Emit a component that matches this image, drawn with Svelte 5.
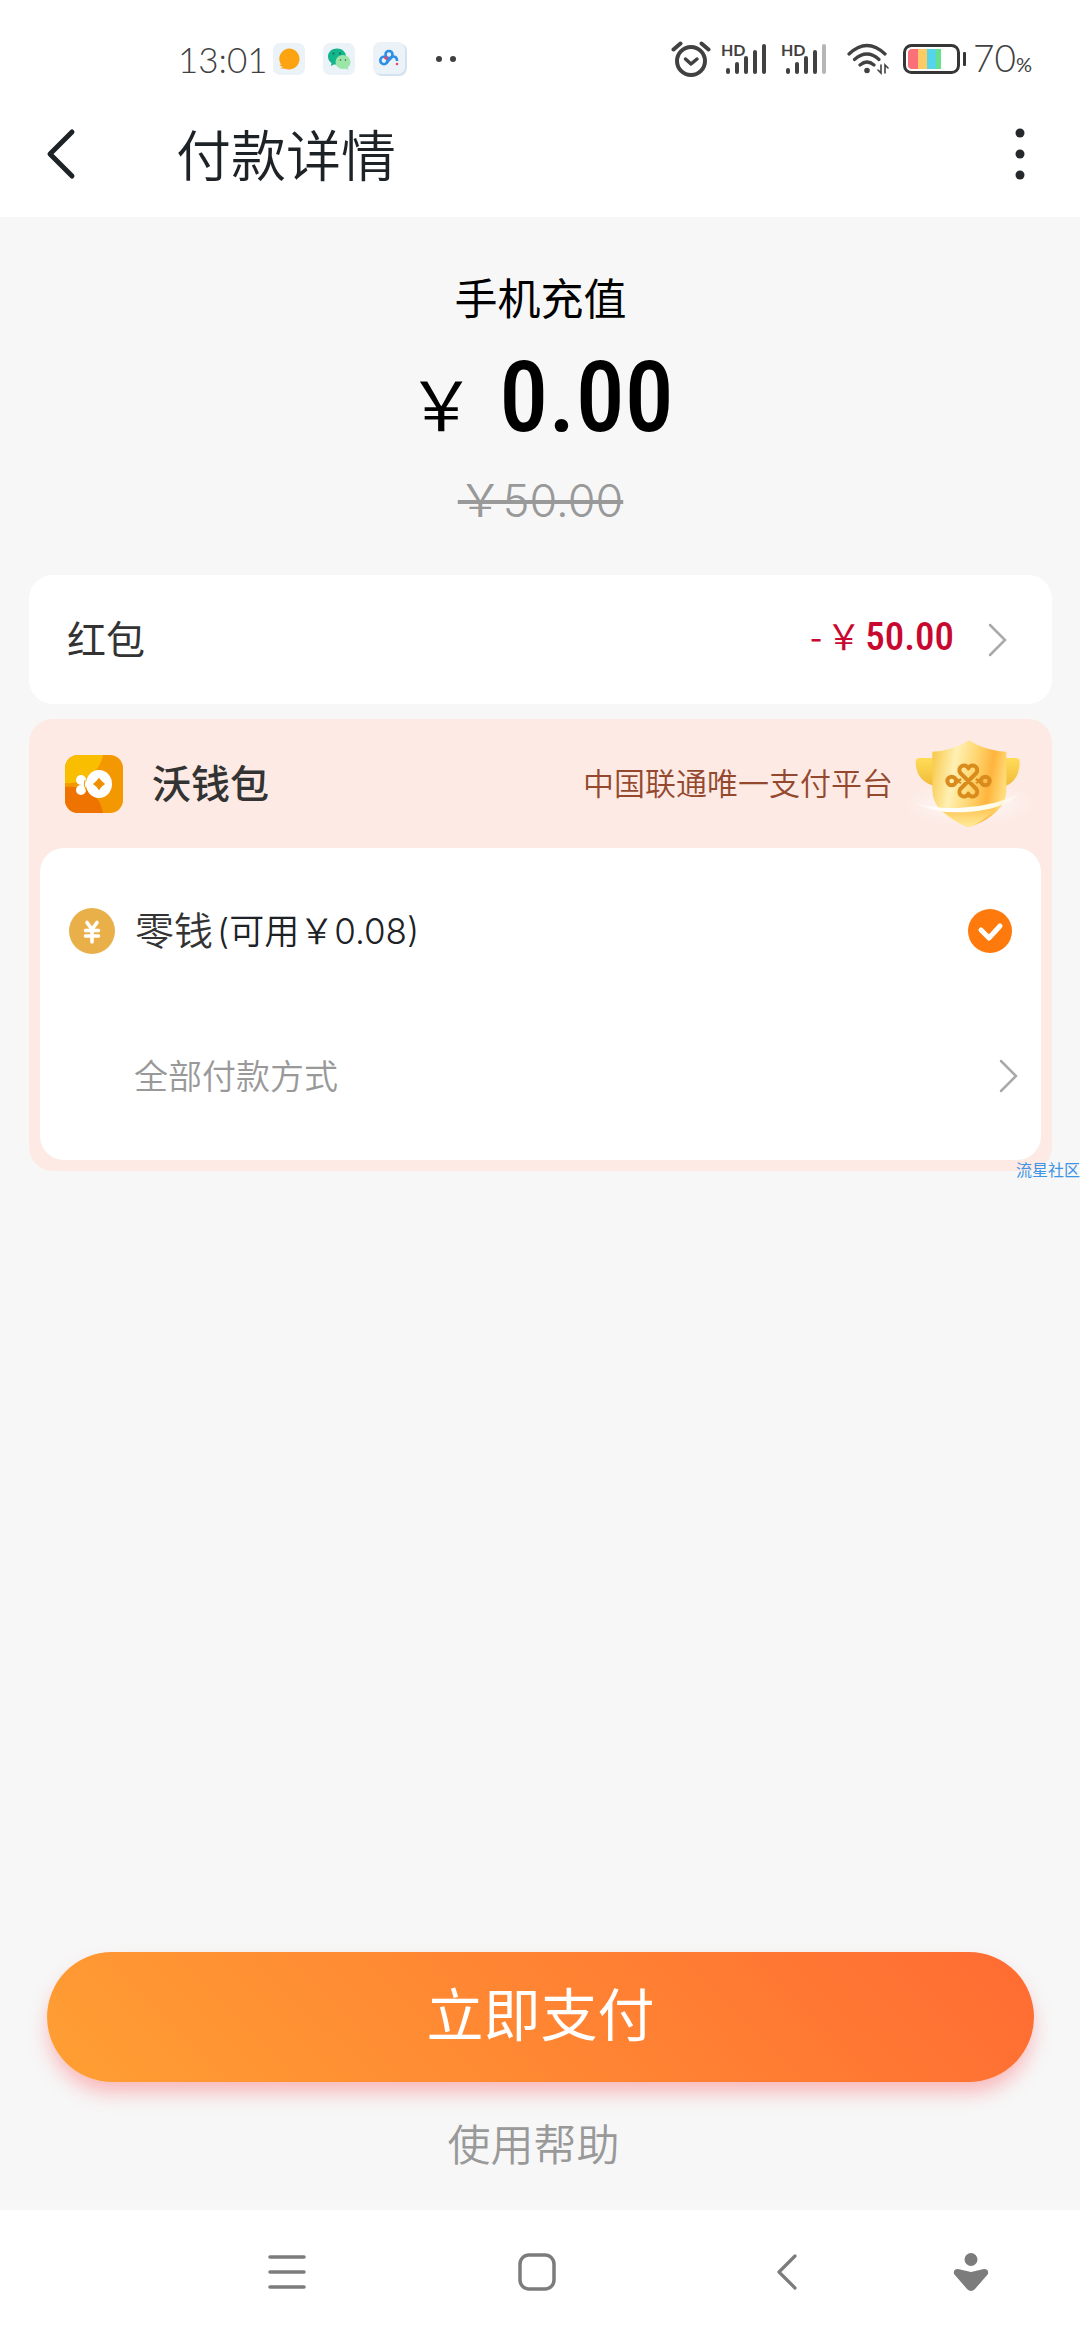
<script lang="ts">
  const order = { title: '手机充值', due: '0.00', original: '50.00' };
  const balance = '0.08';
  const signals = [
    [6, 12, 18, 24, 30],
    [6, 12, 18, 24, 30],
  ];

  let method = $state('change');
</script>

{#snippet chevron()}
  <svg class="chevron" width="20" height="34" viewBox="0 0 20 34" aria-hidden="true">
    <path d="M2 2l15 15L2 32" fill="none" stroke="#a9a9a9" stroke-width="2.5" stroke-linecap="round" />
  </svg>
{/snippet}

<div class="screen">
  <div class="status">
    <div class="status-left">
      <span class="clock">13:01</span>
      <svg width="32" height="32" viewBox="0 0 32 32">
        <rect width="32" height="32" rx="7" fill="#ebf2f8" />
        <path d="M16 5.500a10.500 10.500 0 1 1-4 20.200l-5-.5 3-1.200-3.500-1.500 1.500-.8A10.500 10.500 0 0 1 16 5.500z" fill="#fca311" />
      </svg>
      <svg width="32" height="32" viewBox="0 0 32 32">
        <rect width="32" height="32" rx="7" fill="#ebf2f8" />
        <path d="M14 5.500c5 0 9 3.500 9 8s-4 8-9 8l-3 0-3 1.500.5-3A8 8 0 0 1 5 13.500c0-4.500 4-8 9-8z" fill="#12b58c" />
        <ellipse cx="20" cy="19" rx="7.500" ry="7" fill="#9be5a9" />
        <path d="M24 24l2 2.500-5-1z" fill="#9be5a9" />
        <g fill="#24634f"><circle cx="10.500" cy="10.500" r="1" /><circle cx="17" cy="10.500" r="1" /><circle cx="17.500" cy="17" r=".8" /><circle cx="22.500" cy="17" r=".8" /></g>
      </svg>
      <svg width="34" height="34" viewBox="0 0 34 34">
        <rect x="1" y="1" width="33" height="33" rx="8" fill="#d3e2f0" />
        <rect width="32" height="32" rx="7" fill="#ebf2f8" />
        <g fill="none" stroke="#2e8fe6" stroke-width="2.600">
          <circle cx="11" cy="18.500" r="3.700" />
          <circle cx="16" cy="12.500" r="3.500" />
          <path d="M13 21l5-5c3-3 6-1 6 3" />
        </g>
        <circle cx="13" cy="16" r="1.800" fill="#e5476b" />
        <circle cx="24" cy="22" r="1.300" fill="#e5476b" />
      </svg>
      <svg class="more-dots" width="22" height="8" viewBox="0 0 22 8" fill="#3f3f3f">
        <circle cx="4" cy="4" r="3" /><circle cx="18" cy="4" r="3" />
      </svg>
    </div>

    <div class="status-right">
      <svg width="40" height="36" viewBox="0 0 40 36" fill="none" stroke="#414141" stroke-linecap="round">
        <circle cx="20" cy="20" r="14" stroke-width="4" />
        <path d="M14.500 18l5.500 5 6-5" stroke-width="3.500" stroke-linejoin="round" />
        <path d="M2.500 8.500l7-6M37.500 8.500l-7-6" stroke-width="4" />
      </svg>
      {#each signals as bars, s}
        <div class="signal">
          <span>HD</span>
          <svg width="42" height="32" viewBox="0 0 42 32">
            {#each bars as h, i}
              <rect x={1 + i * 9} y={31 - h} width="4" height={h} rx="2" fill={s === 1 && i === 4 ? '#b5b5b5' : '#414141'} />
            {/each}
          </svg>
        </div>
      {/each}
      <svg class="wifi" width="42" height="32" viewBox="0 0 42 32" fill="none" stroke="#414141" stroke-width="3.200" stroke-linecap="round">
        <path d="M2 11Q20-6 38 11M7.500 16.500Q20 5.500 32 16.500M13 22q7-6 14 0" />
        <circle cx="20" cy="27.500" r="1.800" fill="#414141" stroke-width="2" />
        <path d="M34 22v8l-3-3M38 30v-8l3 3" stroke-width="1.600" />
      </svg>
      <div class="battery">
        <svg width="64" height="30" viewBox="0 0 64 30">
          <rect x="5" y="5" width="10" height="20" rx="4" fill="#fb6f78" />
          <path d="M9 5h6v20H9z" fill="#fb6f78" />
          <path d="M15 5h9v20h-9z" fill="#fccb66" />
          <path d="M24 5h9v20h-9z" fill="#55d4ea" />
          <path d="M33 5h5v20h-5z" fill="#67e08d" />
          <rect x="1.500" y="1.500" width="54" height="27" rx="7" fill="none" stroke="#363636" stroke-width="3" />
          <rect x="60" y="8" width="3" height="14" rx="1" fill="#363636" />
        </svg>
        <span>70<small>%</small></span>
      </div>
    </div>
  </div>

  <header>
    <button class="icon-btn" aria-label="返回">
      <svg width="32" height="54" viewBox="0 0 32 54">
        <path d="M26 5L4 27l22 22" fill="none" stroke="#1d2226" stroke-width="5" stroke-linecap="round" stroke-linejoin="round" />
      </svg>
    </button>
    <h1>付款详情</h1>
    <button class="icon-btn" aria-label="更多">
      <svg width="12" height="54" viewBox="0 0 12 54" fill="#26292c">
        <circle cx="6" cy="6" r="4.500" /><circle cx="6" cy="27" r="4.500" /><circle cx="6" cy="48" r="4.500" />
      </svg>
    </button>
  </header>

  <main>
    <section class="summary">
      <h2>{order.title}</h2>
      <p class="due"><span class="yen">￥</span><strong>{order.due}</strong></p>
      <del>￥{order.original}</del>
    </section>

    <button class="coupon">
      <span class="coupon-name">红包</span>
      <span class="discount"><span>-</span><span>￥</span><b>{order.original}</b></span>
      {@render chevron()}
    </button>

    <section class="wallet">
      <div class="wallet-head">
        <svg width="58" height="58" viewBox="0 0 58 58">
          <defs><clipPath id="tile"><rect width="58" height="58" rx="13" /></clipPath></defs>
          <g clip-path="url(#tile)">
            <path d="M0 0h58v58H0z" fill="#f39800" />
            <path d="M0 0h38q-3 14-14 22-10 7-24 6z" fill="#fabe00" />
            <path d="M0 32q20-2 30 9 6 6 8 17H0z" fill="#ee7300" />
          </g>
          <ellipse cx="34" cy="29" rx="13" ry="14" fill="#fff" />
          <circle cx="16" cy="25" r="5" fill="#fff" />
          <circle cx="16" cy="35" r="5" fill="#fff" />
          <path d="M17 24l7 5-7 7z" fill="#fff" />
          <path d="M20 25q-2 5 1 10" fill="none" stroke="#f39800" stroke-width="1" />
          <path d="M34 24q2 3 5 5-3 2-5 5-2-3-5-5 3-2 5-5z" fill="#f09000" stroke="#f09000" stroke-width="1.500" />
        </svg>
        <h3>沃钱包</h3>
        <span class="slogan">中国联通唯一支付平台</span>
        <svg class="shield" width="140" height="110" viewBox="0 0 420 330">
          <defs>
            <linearGradient id="face" x1="0" y1="0.200" x2="1" y2="0.400">
              <stop offset="0" stop-color="#f8c94c" />
              <stop offset="0.300" stop-color="#fff0b4" />
              <stop offset="0.550" stop-color="#ffd875" />
              <stop offset="0.800" stop-color="#ffb43c" />
              <stop offset="1" stop-color="#ffdc7a" />
            </linearGradient>
            <linearGradient id="tip" x1="0" y1="0" x2="0" y2="1">
              <stop offset="0" stop-color="#ffb638" />
              <stop offset="1" stop-color="#ffec9d" />
            </linearGradient>
            <linearGradient id="wing" x1="0" y1="0" x2="0" y2="1">
              <stop offset="0" stop-color="#ffdc58" />
              <stop offset="1" stop-color="#f0bb39" />
            </linearGradient>
            <linearGradient id="swoosh">
              <stop offset="0" stop-color="#fff" stop-opacity="0" />
              <stop offset="0.300" stop-color="#fff" />
              <stop offset="0.750" stop-color="#fffbe8" />
              <stop offset="1" stop-color="#fff" stop-opacity="0" />
            </linearGradient>
            <radialGradient id="halo">
              <stop offset="0" stop-color="#fff" stop-opacity="0.700" />
              <stop offset="1" stop-color="#fff" stop-opacity="0" />
            </radialGradient>
          </defs>
          <ellipse cx="205" cy="225" rx="200" ry="65" fill="url(#halo)" />
          <path d="M56 87h42v84q-54-18-54-72 0-12 12-12zM344 87h-30v84q42-18 42-72 0-12-12-12z" fill="url(#wing)" />
          <path d="M204 34q48 32 112 34v115q0 72-112 112Q94 255 94 183V68q62-2 110-34z" fill="url(#face)" />
          <path d="M114 235q92 8 182-20-22 50-92 80-62-26-90-60z" fill="url(#tip)" />
          <path d="M25 215q80 28 170 20 110-8 178-55-55 60-165 68Q100 258 25 215z" fill="url(#swoosh)" />
          <g fill="none" stroke="#d98c1c" stroke-width="12" stroke-linejoin="round">
            <circle cx="152" cy="156" r="13" />
            <circle cx="253" cy="156" r="13" />
            <path d="M166 150l14 12M180 150l-14 12M225 150l14 12M239 150l-14 12" stroke-width="7" />
            <path d="M178 132a14 14 0 1 1 24-14 14 14 0 1 1 24 14L178 180a14 14 0 1 0 24 14 14 14 0 1 0 24-14z" />
          </g>
        </svg>
      </div>

      <div class="methods">
        <label class="method">
          <svg width="46" height="46" viewBox="0 0 46 46">
            <circle cx="23" cy="23" r="23" fill="#e9b04a" />
            <path d="M18 14.500l5 7 5-7M23 21.500V34M16.500 22.500h13M16.500 28h13" fill="none" stroke="#fff" stroke-width="3.600" stroke-linecap="round" />
          </svg>
          <span class="method-name">零钱</span>
          <span class="balance">(可用￥{balance})</span>
          <input type="radio" name="method" value="change" bind:group={method} />
        </label>
        <button class="all-methods">
          <span>全部付款方式</span>
          {@render chevron()}
        </button>
      </div>
      <span class="watermark">流星社区</span>
    </section>

    <div class="actions">
      <button class="pay">立即支付</button>
      <a href="#help">使用帮助</a>
    </div>
  </main>

  <nav>
    <button aria-label="最近任务">
      <svg width="38" height="38" viewBox="0 0 38 38">
        <path d="M2 4h34M2 19h34M2 34h34" stroke="#7c7c7c" stroke-width="3.500" stroke-linecap="round" />
      </svg>
    </button>
    <button aria-label="主屏幕">
      <svg width="38" height="38" viewBox="0 0 38 38">
        <rect x="2" y="2" width="34" height="34" rx="9" fill="none" stroke="#7c7c7c" stroke-width="3.500" />
      </svg>
    </button>
    <button aria-label="后退">
      <svg width="22" height="38" viewBox="0 0 22 38">
        <path d="M19 3L3 19l16 16" fill="none" stroke="#7c7c7c" stroke-width="3.200" stroke-linecap="round" stroke-linejoin="round" />
      </svg>
    </button>
    <button aria-label="收起">
      <svg width="36" height="38" viewBox="0 0 36 38" fill="#7c7c7c">
        <circle cx="18" cy="6.500" r="6.500" />
        <path d="M5 16l13 3 13-3q5 0 4 5L22 36q-4 4-8 0L1 21q-1-5 4-5z" />
      </svg>
    </button>
  </nav>
</div>

<style>
  :global(body) {
    margin: 0;
    background: #f7f7f7;
  }

  .screen {
    display: flex;
    flex-direction: column;
    min-height: 100vh;
    font-family: 'Noto Sans CJK SC', sans-serif;
    color: #333;
  }

  h1, h2, h3, p {
    margin: 0;
    font-weight: 400;
  }

  button {
    padding: 0;
    border: 0;
    background: none;
    color: inherit;
    font: inherit;
    cursor: pointer;
  }

  svg {
    display: block;
    flex-shrink: 0;
  }

  .status {
    display: flex;
    justify-content: space-between;
    align-items: center;
    height: 90px;
    padding: 28px 48px 0 178px;
    box-sizing: border-box;
    background: #fff;
    color: #414141;
    font-family: Lato, sans-serif;
    font-weight: 300;
  }

  .status-left {
    display: flex;
    align-items: center;
    gap: 18px;
  }

  .clock {
    width: 77px;
    white-space: nowrap;
    font-size: 35px;
    line-height: 40px;
  }

  .more-dots {
    margin-left: 10px;
  }

  .status-right {
    display: flex;
    align-items: center;
    gap: 10px;
  }

  .signal {
    position: relative;
    padding-left: 4px;
    margin-right: 4px;
  }

  .signal span {
    position: absolute;
    top: 0;
    left: 0;
    font-size: 16px;
    font-weight: 700;
    line-height: 14px;
  }

  .wifi {
    margin-left: 6px;
    margin-right: 4px;
  }

  .battery {
    display: flex;
    align-items: center;
    gap: 6px;
    font-size: 37px;
    line-height: 40px;
  }

  .battery span {
    padding-top: 4px;
  }

  .battery small {
    font-size: 20px;
    font-weight: 400;
  }

  header {
    display: flex;
    align-items: center;
    height: 127px;
    padding: 0 54px 0 46px;
    background: #fff;
    color: #1d2226;
  }

  h1 {
    flex: 1;
    margin-left: 98px;
    padding-bottom: 4px;
    font-size: 55px;
    font-weight: 350;
    line-height: 72px;
  }

  main {
    display: flex;
    flex: 1;
    flex-direction: column;
    padding: 49px 28px 0 29px;
    background: #f7f7f7;
  }

  .summary {
    display: flex;
    flex-direction: column;
    align-items: center;
    color: #000;
  }

  h2 {
    font-size: 43px;
    line-height: 60px;
  }

  .due {
    display: flex;
    align-items: baseline;
    gap: 24px;
    height: 145px;
    line-height: 144px;
  }

  .yen {
    font-size: 68px;
  }

  .due strong {
    font-family: 'Roboto Condensed', Roboto, sans-serif;
    font-size: 98px;
    font-weight: 500;
  }

  del {
    color: #999;
    font-family: Inter, 'Noto Sans CJK SC', sans-serif;
    font-size: 45px;
    font-weight: 350;
    line-height: 60px;
    text-decoration-thickness: 4px;
  }

  .coupon {
    display: flex;
    align-items: center;
    height: 129px;
    margin-top: 44px;
    padding: 0 44px 0 38px;
    border-radius: 24px;
    background: #fff;
  }

  .coupon-name {
    flex: 1;
    padding-bottom: 6px;
    text-align: left;
    font-size: 39px;
    line-height: 56px;
  }

  .discount {
    display: flex;
    align-items: baseline;
    gap: 4px;
    padding-bottom: 8px;
    margin-right: 34px;
    color: #c9082f;
    font-size: 35px;
    line-height: 56px;
  }

  .discount b {
    font-family: 'Roboto Condensed', Roboto, sans-serif;
    font-size: 39px;
    font-weight: 500;
  }

  .wallet {
    position: relative;
    margin-top: 15px;
    padding: 0 11px 11px;
    border-radius: 24px;
    background: #fdeae5;
  }

  .wallet-head {
    display: flex;
    align-items: center;
    height: 129px;
    padding-left: 25px;
  }

  h3 {
    flex: 1;
    margin-left: 29px;
    padding-bottom: 6px;
    font-size: 39px;
    font-weight: 500;
    line-height: 56px;
  }

  .slogan {
    padding-bottom: 4px;
    color: #94492f;
    font-size: 31px;
    font-weight: 350;
    line-height: 48px;
  }

  .shield {
    margin-left: 8px;
  }

  .methods {
    height: 312px;
    border-radius: 24px;
    background: #fff;
  }

  .method {
    display: flex;
    align-items: center;
    height: 166px;
    padding: 0 29px;
  }

  .method-name {
    margin-left: 20px;
    padding-bottom: 6px;
    font-size: 39px;
    font-weight: 350;
    line-height: 56px;
  }

  .balance {
    flex: 1;
    margin-left: 4px;
    color: #1d2226;
    font-family: Inter, 'Noto Sans CJK SC', sans-serif;
    font-size: 35px;
    font-weight: 350;
    line-height: 56px;
  }

  .method input {
    width: 44px;
    height: 44px;
    margin: 0;
    border: 3px solid #ccc;
    border-radius: 50%;
    appearance: none;
  }

  .method input:checked {
    border: 0;
    background: #ff7a0d url("data:image/svg+xml,%3Csvg xmlns='http://www.w3.org/2000/svg' viewBox='0 0 44 44'%3E%3Cpath d='M13 21l8 8L32 17' fill='none' stroke='white' stroke-width='5' stroke-linecap='round' stroke-linejoin='round'/%3E%3C/svg%3E") center / contain no-repeat;
  }

  .all-methods {
    display: flex;
    justify-content: space-between;
    align-items: center;
    width: 100%;
    height: 124px;
    padding: 0 22px 0 94px;
    color: #999;
    font-size: 34px;
    font-weight: 350;
    line-height: 48px;
  }

  .all-methods span {
    padding-bottom: 2px;
  }

  .watermark {
    position: absolute;
    right: -28px;
    bottom: -10px;
    color: #3f93e4;
    font-size: 16px;
    line-height: 24px;
  }

  .actions {
    display: flex;
    flex-direction: column;
    align-items: center;
    margin-top: auto;
    padding: 0 18px 38px;
  }

  .pay {
    width: 100%;
    height: 130px;
    padding-bottom: 12px;
    border-radius: 65px;
    background: linear-gradient(45deg, #ff9f33, #ff6b33);
    box-shadow: 0 12px 20px -2px rgba(255, 60, 70, 0.35);
    color: #fff;
    font-size: 57px;
    line-height: 80px;
  }

  .actions a {
    margin-top: 30px;
    padding-right: 14px;
    color: #999;
    font-size: 43px;
    font-weight: 350;
    line-height: 60px;
    text-decoration: none;
  }

  nav {
    display: grid;
    grid-template-columns: 250fr 250fr 250fr 118fr;
    height: 130px;
    padding: 0 50px 0 162px;
    background: #fff;
  }

  nav button {
    display: flex;
    justify-content: center;
    align-items: center;
    padding-bottom: 6px;
  }
</style>
